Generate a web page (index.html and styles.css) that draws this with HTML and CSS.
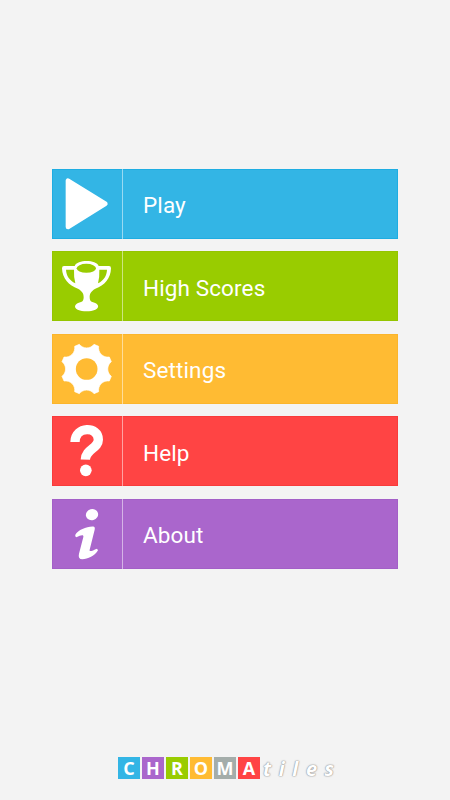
FILE: index.html
```html
<!DOCTYPE html>
<html lang="en">
<head>
<meta charset="utf-8">
<title>Chromatiles</title>
<link rel="stylesheet" href="styles.css">
</head>
<body>
<main class="screen">
  <nav class="menu">
    <a class="item blue"><span class="icon"><svg viewBox="21 27 210 210"><path d="M69 62V201L181 131Z" fill="#fff" stroke="#fff" stroke-width="14" stroke-linejoin="round"/></svg></span><span class="label">Play</span></a>
    <a class="item green"><span class="icon"><svg viewBox="21 18 210 210"><path fill="#fff" fill-rule="evenodd" d="M89 63C96 43 154 43 161 63H192Q198 63 198 70C197 101 179 121 151 131C136 140 134 147 134 157Q134 169 142 171C168 176 167 199 125 199C82 199 82 176 108 171Q116 169 116 157C116 147 114 140 99 131C71 121 52 101 51 70Q51 63 57 63ZM63 74C64 92 73 106 91 115Q86 96 87 74ZM163 74Q164 96 159 115C177 106 185 92 186 74Z"/><ellipse cx="124" cy="70" rx="29" ry="13.5" fill="#9c0"/></svg></span><span class="label">High Scores</span></a>
    <a class="item amber"><span class="icon"><svg viewBox="21 17 210 210"><g transform="translate(125 122)"><path fill="#fff" stroke="#fff" stroke-width="2" stroke-linejoin="round" d="M-22 -74A28 28 0 0 0 22 -74L36 -68A28 28 0 0 0 68 -36L74 -22A28 28 0 0 0 74 22L68 36A28 28 0 0 0 36 68L22 74A28 28 0 0 0 -22 74L-36 68A28 28 0 0 0 -68 36L-74 22A28 28 0 0 0 -74 -22L-68 -36A28 28 0 0 0 -36 -68Z"/><circle r="32.500" fill="#fb3"/></g></svg></span><span class="label">Settings</span></a>
    <a class="item red"><span class="icon"><svg viewBox="21 18 210 210"><path d="M90 96C91 48 160 48 160 89C160 115 122 117 121 149" fill="none" stroke="#fff" stroke-width="28"/><circle cx="122.500" cy="181" r="17.500" fill="#fff"/></svg></span><span class="label">Help</span></a>
    <a class="item purple"><span class="icon"><svg viewBox="21 20 210 210"><ellipse cx="141" cy="67" rx="18.500" ry="16.500" fill="#fff" transform="rotate(-15 141 67)"/><path fill="#fff" d="M91 127C100 113 127 101 147 103Q151 105 149 112L134 172C132 181 143 174 156 169L159 174C150 190 128 201 112 201Q98 200 102 184L115 134C117 126 108 127 94 135Q89 132 91 127Z"/></svg></span><span class="label">About</span></a>
  </nav>
  <footer class="brand"><span class="tile blue">C</span><span class="tile purple">H</span><span class="tile green">R</span><span class="tile amber">O</span><span class="tile gray">M</span><span class="tile red">A</span><span class="rest">tiles</span></footer>
</main>
</body>
</html>
```
FILE: styles.css
```css
* { box-sizing: border-box; }
body { margin: 0; background: #f3f3f3; font-family: Roboto, sans-serif; }
.screen {
  height: 800px;
  padding: 168.8px 52px 21px;
  display: flex;
  flex-direction: column;
  justify-content: space-between;
}
.menu { display: flex; flex-direction: column; gap: 12.5px; }
.item {
  display: flex;
  height: 70px;
  align-items: center;
  background: var(--c);
  border: 1px solid var(--edge);
  color: #fff;
}
.icon {
  width: 70px;
  height: 70px;
  flex: none;
  margin-left: -1px;
  border-right: 1px solid rgba(255, 255, 255, .5);
  box-sizing: content-box;
}
.icon svg { display: block; width: 70px; height: 70px; }
.label { padding: 3px 0 0 20px; font-size: 22.5px; letter-spacing: .12px; line-height: 28px; }
.blue { --c: #33b5e5; --edge: #1eade2; }
.green { --c: #99cc00; --edge: #94c500; }
.amber { --c: #ffbb33; --edge: #fbb52c; }
.red { --c: #ff4444; --edge: #f83b3b; }
.purple { --c: #aa66cc; --edge: #a35fc7; }
.gray { --c: #a4adaa; --edge: #a4adaa; }
.brand {
  display: flex;
  gap: 2px;
  margin-left: 66px;
  font-family: "Open Sans", sans-serif;
}
.tile {
  width: 22px;
  height: 22px;
  background: var(--c);
  color: #fff;
  font-size: 18px;
  font-weight: 700;
  line-height: 22px;
  text-align: center;
}
.rest {
  padding-left: 1px;
  height: 22px;
  line-height: 23px;
  color: #fff;
  font-size: 20px;
  font-weight: 700;
  font-style: italic;
  letter-spacing: 7.6px;
  text-shadow: 0 0 1px #999, 0 0 1px #999, 0 0 2px #aaa;
}
```
